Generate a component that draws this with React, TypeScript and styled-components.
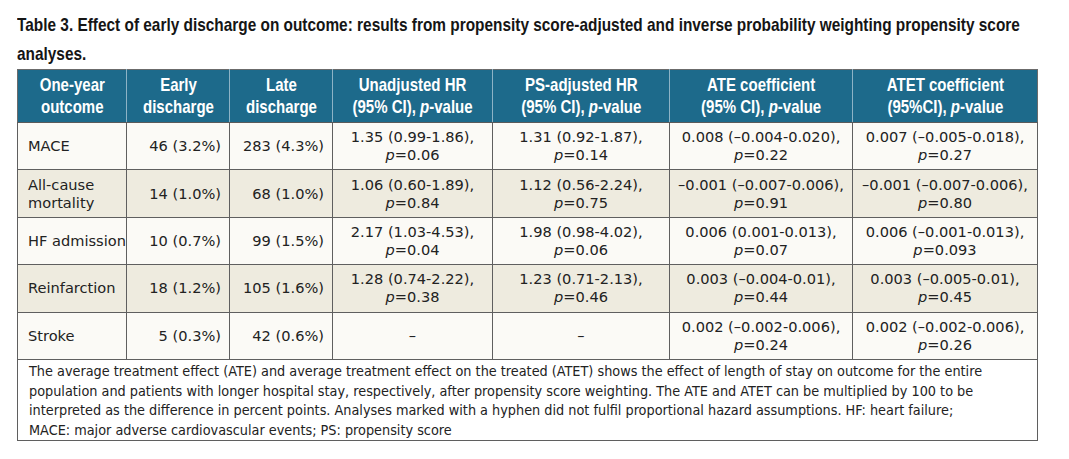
import React from "react";
import styled, { createGlobalStyle } from "styled-components";

const Global = createGlobalStyle`
  html, body { margin: 0; padding: 0; background: #ffffff; }
  body { width: 1069px; height: 459px; overflow: hidden; }
`;

const Page = styled.div`
  padding: 10px 32px 0 17px;
`;

const Title = styled.h1`
  margin: 0 0 1px;
  font-family: "Liberation Sans", Arial, sans-serif;
  font-weight: 700;
  font-size: 19px;
  line-height: 29px;
  color: #151515;
`;

/* Condensed bold face: the reference uses a narrow gothic, so the
   installed sans is squeezed horizontally. */
const Condensed = styled.span<{ $k: number; $origin?: "left" | "center" }>`
  display: block;
  white-space: nowrap;
  width: ${(p) => `calc(100% / ${p.$k})`};
  margin-left: ${(p) => (p.$origin === "left" ? "0" : `calc(50% - 50% / ${p.$k})`)};
  transform: scaleX(${(p) => p.$k});
  transform-origin: ${(p) => (p.$origin === "left" ? "left center" : "center center")};
`;

const Table = styled.table`
  border-collapse: collapse;
  table-layout: fixed;
  width: 1020px;
  border: 1px solid #6b6b6b;
`;

const HeadCell = styled.th`
  background: #1d6a8b;
  color: #ffffff;
  font-family: "Liberation Sans", Arial, sans-serif;
  font-weight: 700;
  font-size: 19px;
  line-height: 22px;
  text-align: center;
  padding: 4px 4px 4px;
  height: 44px;
  border-left: 1px solid #8db3c6;
  border-bottom: 1px solid #5a5a5a;
  &:first-child { border-left: 1px solid #6b6b6b; }
`;

const Row = styled.tr<{ $shade: boolean }>`
  background: ${(p) => (p.$shade ? "#eeebdf" : "#fbfaf6")};
`;

const Cell = styled.td<{ $align: "left" | "right" | "center" }>`
  font-family: "DejaVu Sans", "Liberation Sans", sans-serif;
  font-size: 14.6px;
  line-height: 18px;
  color: #222222;
  text-align: ${(p) => p.$align};
  padding: 5px ${(p) => (p.$align === "right" ? "8px" : "4px")} 5px
    ${(p) => (p.$align === "left" ? "10px" : "4px")};
  height: 36.4px;
  border: 1px solid #5f5f5f;
  white-space: nowrap;
`;

const Note = styled.td`
  background: #ffffff;
  font-family: "DejaVu Sans", "Liberation Sans", sans-serif;
  font-stretch: condensed;
  font-size: 14.3px;
  line-height: 19.6px;
  color: #222222;
  padding: 2px 10px 0 11px;
  border: 1px solid #5f5f5f;
`;

const Line = styled.span`
  display: block;
  white-space: nowrap;
`;

const P = styled.i`
  font-style: italic;
`;

type Stat = { v: string; p: string } | null;

interface DataRow {
  outcome: string[];
  early: string;
  late: string;
  unadj: Stat;
  ps: Stat;
  ate: Stat;
  atet: Stat;
}

const rows: DataRow[] = [
  {
    outcome: ["MACE"],
    early: "46 (3.2%)",
    late: "283 (4.3%)",
    unadj: { v: "1.35 (0.99-1.86),", p: "0.06" },
    ps: { v: "1.31 (0.92-1.87),", p: "0.14" },
    ate: { v: "0.008 (\u20130.004-0.020),", p: "0.22" },
    atet: { v: "0.007 (\u20130.005-0.018),", p: "0.27" },
  },
  {
    outcome: ["All-cause", "mortality"],
    early: "14 (1.0%)",
    late: "68 (1.0%)",
    unadj: { v: "1.06 (0.60-1.89),", p: "0.84" },
    ps: { v: "1.12 (0.56-2.24),", p: "0.75" },
    ate: { v: "\u20130.001 (\u20130.007-0.006),", p: "0.91" },
    atet: { v: "\u20130.001 (\u20130.007-0.006),", p: "0.80" },
  },
  {
    outcome: ["HF admission"],
    early: "10 (0.7%)",
    late: "99 (1.5%)",
    unadj: { v: "2.17 (1.03-4.53),", p: "0.04" },
    ps: { v: "1.98 (0.98-4.02),", p: "0.06" },
    ate: { v: "0.006 (0.001-0.013),", p: "0.07" },
    atet: { v: "0.006 (\u20130.001-0.013),", p: "0.093" },
  },
  {
    outcome: ["Reinfarction"],
    early: "18 (1.2%)",
    late: "105 (1.6%)",
    unadj: { v: "1.28 (0.74-2.22),", p: "0.38" },
    ps: { v: "1.23 (0.71-2.13),", p: "0.46" },
    ate: { v: "0.003 (\u20130.004-0.01),", p: "0.44" },
    atet: { v: "0.003 (\u20130.005-0.01),", p: "0.45" },
  },
  {
    outcome: ["Stroke"],
    early: "5 (0.3%)",
    late: "42 (0.6%)",
    unadj: null,
    ps: null,
    ate: { v: "0.002 (\u20130.002-0.006),", p: "0.24" },
    atet: { v: "0.002 (\u20130.002-0.006),", p: "0.26" },
  },
];

const headers: { top: string; bottom: React.ReactNode }[] = [
  { top: "One-year", bottom: "outcome" },
  { top: "Early", bottom: "discharge" },
  { top: "Late", bottom: "discharge" },
  { top: "Unadjusted HR", bottom: <>(95% CI), <P>p</P>-value</> },
  { top: "PS-adjusted HR", bottom: <>(95% CI), <P>p</P>-value</> },
  { top: "ATE coefficient", bottom: <>(95% CI), <P>p</P>-value</> },
  { top: "ATET coefficient", bottom: <>(95%CI), <P>p</P>-value</> },
];

const widths = [109, 103, 103, 160, 177, 183, 185];

const HEAD_K = 0.79;
const TITLE_K = 0.81;

const StatCell = ({ s }: { s: Stat }) => (
  <Cell $align="center">
    {s ? (
      <>
        {s.v}
        <br />
        <P>p</P>={s.p}
      </>
    ) : (
      "\u2013"
    )}
  </Cell>
);

export default function App() {
  return (
    <>
      <Global />
      <Page>
        <Title>
          <Condensed $k={TITLE_K} $origin="left">
            Table 3. Effect of early discharge on outcome: results from propensity score-adjusted and inverse
            probability weighting propensity score
          </Condensed>
          <Condensed $k={TITLE_K} $origin="left">
            analyses.
          </Condensed>
        </Title>
        <Table>
          <colgroup>
            {widths.map((w, i) => (
              <col key={i} style={{ width: w }} />
            ))}
          </colgroup>
          <thead>
            <tr>
              {headers.map((h, i) => (
                <HeadCell key={i}>
                  <Condensed $k={HEAD_K}>{h.top}</Condensed>
                  <Condensed $k={HEAD_K}>{h.bottom}</Condensed>
                </HeadCell>
              ))}
            </tr>
          </thead>
          <tbody>
            {rows.map((r, i) => (
              <Row key={i} $shade={i % 2 === 1}>
                <Cell $align="left">
                  {r.outcome.map((o, j) => (
                    <React.Fragment key={j}>
                      {j > 0 && <br />}
                      {o}
                    </React.Fragment>
                  ))}
                </Cell>
                <Cell $align="right">{r.early}</Cell>
                <Cell $align="right">{r.late}</Cell>
                <StatCell s={r.unadj} />
                <StatCell s={r.ps} />
                <StatCell s={r.ate} />
                <StatCell s={r.atet} />
              </Row>
            ))}
            <tr>
              <Note colSpan={7}>
                <Line>
                  The average treatment effect (ATE) and average treatment effect on the treated (ATET) shows the
                  effect of length of stay on outcome for the entire
                </Line>
                <Line>
                  population and patients with longer hospital stay, respectively, after propensity score weighting.
                  The ATE and ATET can be multiplied by 100 to be
                </Line>
                <Line>
                  interpreted as the difference in percent points. Analyses marked with a hyphen did not fulfil
                  proportional hazard assumptions. HF: heart failure;
                </Line>
                <Line>MACE: major adverse cardiovascular events; PS: propensity score</Line>
              </Note>
            </tr>
          </tbody>
        </Table>
      </Page>
    </>
  );
}
